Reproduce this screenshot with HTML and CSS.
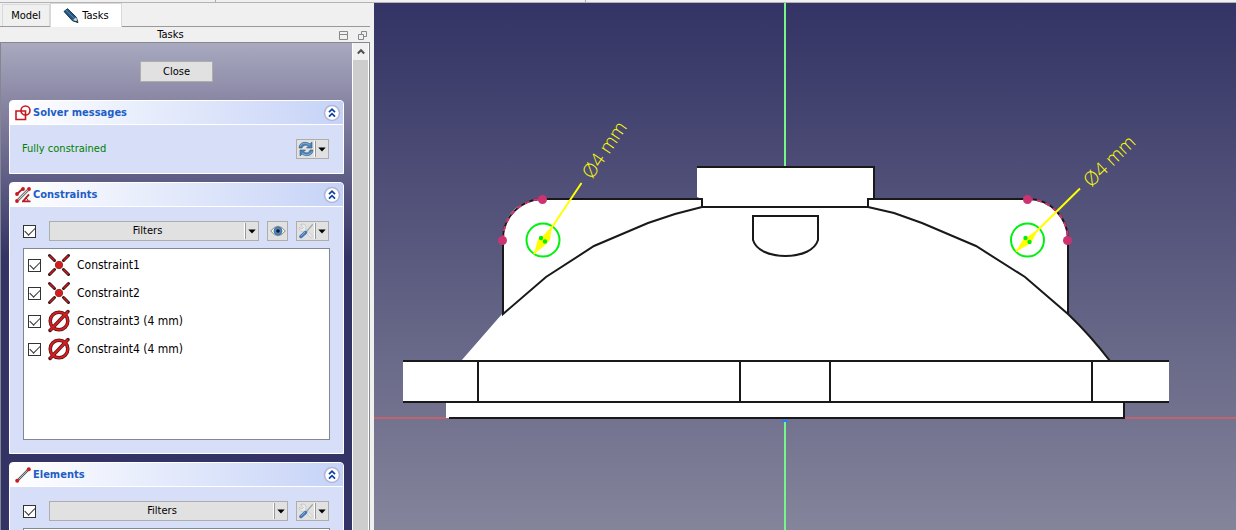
FILE: index.html
```html
<!DOCTYPE html>
<html lang="en">
<head>
<meta charset="utf-8">
<title>Sketch tasks</title>
<link rel="stylesheet" href="styles.css">
</head>
<body>
<svg class="defs" aria-hidden="true">
  <symbol id="collapse" viewBox="0 0 18 18"><circle cx="9" cy="9" r="7.5" fill="#fff" stroke="#b2b5d8" stroke-width="1.6"/><path d="M6 8.2 9 5.2l3 3M6 12.7l3-3 3 3" fill="none" stroke="#0c40a8" stroke-width="1.7"/></symbol>
  <symbol id="arrow" viewBox="0 0 8 5"><path d="M.3.5h7.4L4 4.6z"/></symbol>
  <symbol id="tools" viewBox="0 0 16 16"><path d="M2.500 1.500 6 1l2 2.500-.5 2.500 6.500 6.500c1 1-.7 2.700-1.700 1.700L6 8 3 8.300 1 6l.3-1.500L4 6l1.500-1.500z" fill="#eceeed" stroke="#bfc2c1" stroke-width=".8"/><path d="m14.700 1.300-6 7" stroke="#9aa3a5" stroke-width="1.300"/><path d="m7.500 9.500-4.500 4" stroke="#4a78b4" stroke-width="3.600" stroke-linecap="round"/><path d="m7 9.200-3.800 3.600" stroke="#85abd8" stroke-width="1"/></symbol>
  <symbol id="coincident" viewBox="0 0 24 24"><path d="M2.500 2.500 7.500 7.500m9 9 5 5m0-19-5 5m-9 9-5 5" stroke="#301010" stroke-width="3" stroke-linecap="round"/><path d="M2.500 2.500 7.500 7.500m9 9 5 5m0-19-5 5m-9 9-5 5" stroke="#d91c20" stroke-width="1.300"/><circle cx="12" cy="12" r="3.700" fill="#d81a1d" stroke="#9d3030"/></symbol>
  <symbol id="diameter" viewBox="0 0 24 24"><g fill="none" stroke="#511416" stroke-width="3.500" stroke-linecap="round"><circle cx="12" cy="12" r="8.800"/><path d="M3 21.500 21 2.500"/></g><g fill="none" stroke="#d91c20" stroke-width="2"><circle cx="12" cy="12" r="8.800"/><path d="M3 21.500 21 2.500"/></g></symbol>
</svg>
<header class="toolbar-edge"><span class="edge-first"></span><span class="edge-second"></span></header>
<main class="workspace">
  <aside class="sidebar">
    <nav class="tabs">
      <button class="tab">Model</button>
      <button class="tab active"><svg width="16" height="16" viewBox="0 0 16 16"><path d="M1 3.500 4.500.7l8.800 8.500L15 14.500 9.500 12.800z" fill="#255784" stroke="#143553"/><path d="m3 2 8.500 8.800" stroke="#5688b4"/><path d="m10 12 3.200-2.800 1.300 4.600z" fill="#d3d9d8"/><path d="m13 12.400 2.200 2.200-2.700-.8z" fill="#222"/></svg>Tasks</button>
    </nav>
    <div class="dock-title"><span>Tasks</span>
      <button class="dock-button" aria-label="Shade panel"><svg width="9" height="9" viewBox="0 0 9 9"><path d="M.5.5h8v8h-8zM.5 3.500h8" fill="none" stroke="#888"/></svg></button>
      <button class="dock-button" aria-label="Float panel"><svg width="9" height="9" viewBox="0 0 9 9"><path d="M.5 3.500h5v5h-5zM3.500 3.500v-3h5v5h-3" fill="none" stroke="#888"/></svg></button>
    </div>
    <div class="task-view">
      <div class="task-content">
        <button class="close">Close</button>
        <section class="group">
          <header class="group-header">
            <svg class="group-icon" width="16" height="16" viewBox="0 0 16 16" fill="none" stroke="#c91820" stroke-width="1.600"><path d="M1 6h9.500v8.500H1z"/><circle cx="10.500" cy="5.500" r="4.500"/></svg>
            <h2>Solver messages</h2><button class="collapse" aria-label="Collapse solver messages"><svg><use href="#collapse"/></svg></button>
          </header>
          <div class="solver-body"><span>Fully constrained</span>
            <div class="split"><button class="tool" aria-label="Update"><svg width="16" height="16" viewBox="0 0 16 16"><path d="M1 7C1.200 1 8 0 12 3l2-2v6H8.500l2-2C7.500 3.500 5 4 4 7z" fill="#4c83b7" stroke="#315c85" stroke-width=".6"/><path d="M15 9c-.2 6-7 7-11 4l-2 2V9h5.500l-2 2c3 1.500 5.500 1 6.500-2z" fill="#4c83b7" stroke="#315c85" stroke-width=".6"/><path d="M2 5.200C4 1.500 8 1.500 12 4.200M4 12c4 3 8 2 10-1.500" fill="none" stroke="#91b9da" stroke-width=".8"/></svg></button><button class="drop" aria-label="Update options"><svg class="arrow"><use href="#arrow"/></svg></button></div>
          </div>
        </section>
        <section class="group">
          <header class="group-header">
            <svg class="group-icon" width="16" height="16" viewBox="0 0 16 16"><path d="M3 13 13 3" stroke="#777" stroke-width="2.600"/><path d="M3 13 13 3" stroke="#ddd" stroke-width=".9"/><path d="m1.500 7.500 6-5.500M8 14.300l6-7M7 14.300h8.500" stroke="#b71c20" stroke-width="1.800"/><path d="M10.500 11q2.500.5 2.500 3" fill="none" stroke="#b71c20"/><g fill="#c9181d"><circle cx="2" cy="7" r="1.900"/><circle cx="8" cy="2" r="1.900"/><circle cx="2" cy="14" r="1.900"/><circle cx="14" cy="2" r="1.900"/></g></svg>
            <h2>Constraints</h2><button class="collapse" aria-label="Collapse constraints"><svg><use href="#collapse"/></svg></button>
          </header>
          <div class="list-body">
            <div class="filters"><input type="checkbox" checked aria-label="Filter constraints">
              <div class="split wide"><button class="filter">Filters</button><button class="drop" aria-label="Constraint filters"><svg class="arrow"><use href="#arrow"/></svg></button></div>
              <button class="eye" aria-label="Show or hide"><svg width="16" height="16" viewBox="0 0 16 16"><path d="M.7 8Q8-1.500 15.300 8 8 17.500 .7 8z" fill="#f4f6f2" stroke="#858c85"/><circle cx="8" cy="8" r="4" fill="#5285bb" stroke="#3d6b9a" stroke-width=".8"/><circle cx="8" cy="8" r="1.800" fill="#101d28"/></svg></button>
              <div class="split"><button class="tool" aria-label="Settings"><svg width="16" height="16"><use href="#tools"/></svg></button><button class="drop" aria-label="Settings options"><svg class="arrow"><use href="#arrow"/></svg></button></div>
            </div>
            <div class="list constraints">
              <label><input type="checkbox" checked><svg width="24" height="24"><use href="#coincident"/></svg>Constraint1</label>
              <label><input type="checkbox" checked><svg width="24" height="24"><use href="#coincident"/></svg>Constraint2</label>
              <label><input type="checkbox" checked><svg width="24" height="24"><use href="#diameter"/></svg>Constraint3 (4 mm)</label>
              <label><input type="checkbox" checked><svg width="24" height="24"><use href="#diameter"/></svg>Constraint4 (4 mm)</label>
            </div>
          </div>
        </section>
        <section class="group">
          <header class="group-header">
            <svg class="group-icon" width="16" height="16" viewBox="0 0 16 16"><path d="m2 14 12-12" stroke="#555" stroke-width="2.400"/><path d="m2 14 12-12" stroke="#ccc" stroke-width=".8"/><circle cx="2.200" cy="13.700" r="2" fill="#cf171d"/><circle cx="13.800" cy="2.200" r="2" fill="#cf171d"/></svg>
            <h2>Elements</h2><button class="collapse" aria-label="Collapse elements"><svg><use href="#collapse"/></svg></button>
          </header>
          <div class="list-body">
            <div class="filters"><input type="checkbox" checked aria-label="Filter elements">
              <div class="split wide"><button class="filter">Filters</button><button class="drop" aria-label="Element filters"><svg class="arrow"><use href="#arrow"/></svg></button></div>
              <div class="split"><button class="tool" aria-label="Element settings"><svg width="16" height="16"><use href="#tools"/></svg></button><button class="drop" aria-label="Element settings options"><svg class="arrow"><use href="#arrow"/></svg></button></div>
            </div>
            <div class="list"></div>
          </div>
        </section>
      </div>
      <div class="scrollbar"><button aria-label="Scroll up"><svg width="8" height="7" viewBox="0 0 8 7"><path d="m.8 5.500 3.200-3.300 3.200 3.300" fill="none" stroke="#505050" stroke-width="2"/></svg></button><div class="thumb"></div></div>
    </div>
  </aside>
  <section class="viewport" aria-label="Sketch view">
    <svg class="drawing" viewBox="374 3 862 527" preserveAspectRatio="xMidYMid slice" fill="none">
      <path d="M785 3v164M785 420v110" stroke="#78f58a" stroke-width="2"/>
      <path d="M374 418h75M1121 418h115" stroke="#c0646e" stroke-width="2"/>
      <g fill="#fff">
        <path d="M461 361 502 314V240Q504 202 542 199H702L697 197V167H874V199H1028Q1065 202 1068 240V314Q1090 334 1109 361H1169V402H1124V418H446V402H403V361z"/>
      </g>
      <g stroke="#191919" stroke-width="2">
        <path d="M697 167H874V199M542 199H702V207H868V199H1028M503 240V314L546 277 594 246 648 223 675 214 702 207M868 207 894 213 922 223 976 246 1025 277 1068 314V240M1068 314Q1090 335 1110 361"/>
        <path d="M753 216H818V240C815 250 802 256 785.500 256S756 250 753 240z"/>
        <path d="M403 361H1169M403 402H1169M478 361V402M740 361V402M830 361V402M1092 361V402M449 418H1124V402"/>
        <path d="M503 240A40 40 0 0 1 542 199M1028 199A40 41 0 0 1 1068 240"/>
      </g>
      <path d="M503 240A40 40 0 0 1 542 199M1028 199A40 41 0 0 1 1068 240" stroke="#cc3370" stroke-width="2" stroke-dasharray="5 4"/>
      <g fill="#cc3370"><circle cx="542.500" cy="199.500" r="4.500"/><circle cx="502.500" cy="240.500" r="4.500"/><circle cx="1027.500" cy="199.500" r="4.500"/><circle cx="1067.500" cy="240.500" r="4.500"/></g>
      <g stroke="#00f010" stroke-width="2"><circle cx="543" cy="240" r="16.500"/><circle cx="1027.500" cy="240" r="16.500"/></g>
      <path d="M534 254 581.500 183M1016 251.500 1080 188.500" stroke="#ff0" stroke-width="2"/>
      <path d="m534 254 4-15 5-3 9-10-2 14-6 6zM1016 251.500l7-12 5-3 10-7-6 12-5 4z" fill="#ff0"/>
      <g fill="#00ed13"><circle cx="541" cy="238" r="2.200"/><circle cx="545" cy="241.500" r="2.200"/><circle cx="1025.500" cy="238" r="2.200"/><circle cx="1029.500" cy="242" r="2.200"/></g>
      <path d="M781 420h8l-2 2h-4z" fill="#257cff"/>
      <text class="dimension" transform="translate(592 180) rotate(-56)">Ø4 mm</text>
      <text class="dimension" transform="translate(1091 188) rotate(-44)">Ø4 mm</text>
    </svg>
  </section>
</main>
</body>
</html>
```
FILE: styles.css
```css
* { box-sizing: border-box; }
body { margin: 0; height: 100vh; overflow: hidden; display: flex; flex-direction: column; background: #f0f0f0; color: #000; font-family: Tahoma, "DejaVu Sans Condensed", sans-serif; font-size: 11px; line-height: 16px; }
button { margin: 0; padding: 0; border: 0; background: none; color: inherit; font: inherit; display: flex; align-items: center; justify-content: center; }
svg { display: block; flex-shrink: 0; }
.defs { position: absolute; width: 0; height: 0; }
.toolbar-edge { display: flex; flex: 0 0 3px; border-bottom: 1px solid #b3b3b3; }
.edge-first { width: 216px; border-right: 1px solid #aaa; }
.edge-second { width: 370px; border-right: 1px solid #aaa; }
.workspace { flex: 1; min-height: 0; display: flex; }
.sidebar { width: 374px; flex-shrink: 0; padding-right: 4px; display: flex; flex-direction: column; }
.tabs { flex: 0 0 24px; display: flex; align-items: flex-end; padding-left: 2px; border-bottom: 1px solid #999; }
.tab { width: 48px; height: 22px; border: 1px solid #d9d9d9; border-bottom: 0; }
.tab.active { width: 72px; height: 24px; margin-bottom: -1px; gap: 3px; background: #fff; }
.dock-title { height: 15px; flex-shrink: 0; display: grid; grid-template-columns: 1fr 9px 9px; gap: 10px; align-items: center; padding-right: 3px; }
.dock-title span { text-align: center; padding-left: 12px; }
.task-view { flex: 1; min-height: 0; overflow: hidden; display: flex; border: 1px solid #828790; border-bottom: 0; background: linear-gradient(#a9a9c0, #8885a3 60px, #333366 215px); }
.task-content { flex: 1; min-width: 0; padding: 18px 8px 0; display: flex; flex-direction: column; gap: 8px; }
.close { align-self: center; width: 73px; height: 21px; flex-shrink: 0; margin-bottom: 10px; border: 1px solid #adadad; background: #e1e1e1; }
.group { flex-shrink: 0; border: 1px solid #fff; border-radius: 4px 4px 0 0; background: #d6dff7; }
.group-header { height: 24px; display: flex; align-items: center; gap: 2px; padding: 0 2px 0 5px; border-bottom: 1px solid #fff; border-radius: 3px 3px 0 0; background: linear-gradient(90deg, #fff, #c6d3f7); }
.group-header h2 { flex: 1; margin: 0; color: #215dc6; font-size: 11px; line-height: 16px; }
.collapse, .collapse svg { width: 18px; height: 18px; }
.solver-body { height: 48px; display: flex; align-items: center; justify-content: space-between; padding: 0 14px 0 12px; color: #008000; }
.split { width: 33px; height: 20px; display: flex; border: 1px solid #adadad; background: #e1e1e1; color: #000; }
.split.wide { flex: 1; }
.tool, .filter { flex: 1; }
.drop { width: 13px; margin: 1px 0; border-left: 1px solid #999; box-shadow: -1px 0 #fff; }
.arrow { width: 8px; height: 5px; }
.list-body { padding: 14px 13px 13px; }
input[type="checkbox"] { appearance: none; flex-shrink: 0; width: 13px; height: 13px; margin: 0; border: 1px solid #333; background: #fff; }
input[type="checkbox"]:checked::after { content: ""; display: block; width: 9px; height: 5px; margin: 1px; border-left: 1px solid #333; border-bottom: 1px solid #333; transform: rotate(-45deg); }
.filters { display: flex; align-items: center; gap: 8px; padding-right: 1px; }
.filters input[type="checkbox"] { margin-right: 5px; }
.eye { width: 21px; height: 20px; border: 1px solid #adadad; background: #e1e1e1; }
.list { min-height: 192px; margin-top: 7px; padding: 2px 4px; border: 1px solid #828790; background: #fff; }
.list label { display: flex; align-items: center; height: 28px; gap: 6px; font-size: 12px; }
.scrollbar { width: 17px; border-left: 1px solid #fff; border-right: 1px solid #fff; background: #f0f0f0; display: flex; flex-direction: column; }
.scrollbar button { height: 17px; }
.thumb { flex: 1; background: #cdcdcd; }
.viewport { flex: 1; min-width: 0; background: linear-gradient(#333365, #84849b); }
.drawing { width: 100%; height: 100%; }
.dimension { fill: #ff0; font-family: "Open Sans", sans-serif; font-size: 19px; font-weight: 300; }
```
